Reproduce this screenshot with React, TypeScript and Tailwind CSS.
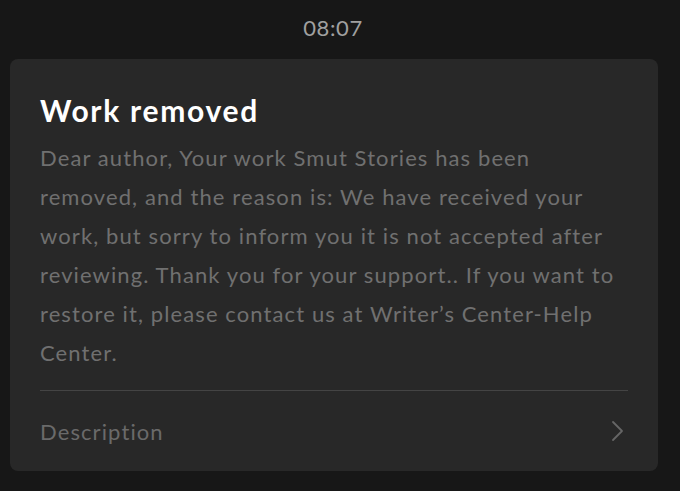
import React from 'react';

export default function App() {
  return (
    <div className="h-[491px] w-[680px] overflow-hidden bg-[#171717] font-['Lato',sans-serif]">
      <div className="flex h-[59px] items-center justify-center pb-1 pr-[14px] text-[22px] tracking-[0.6px] text-[#a0a0a0]">
        08:07
      </div>
      <div className="mx-[10px] w-[648px] rounded-[8px] bg-[#282828] px-[30px] pt-[33px]">
        <h1 className="text-[30px] font-bold leading-[36px] tracking-[1.7px] text-white">Work removed</h1>
        <p className="mt-[10px] text-[22px] leading-[39px] tracking-[1.1px] text-[#707070]">
          Dear author, Your work Smut Stories has been removed, and the reason is: We have received your
          work, but sorry to inform you it is not accepted after reviewing. Thank you for your support.. If
          you want to restore it, please contact us at Writer’s Center-Help Center.
        </p>
        <div className="mt-[18px] h-px bg-[#444444]" />
        <div className="flex h-[80px] items-center justify-between">
          <span className="text-[22px] tracking-[1.1px] text-[#6a6a6a]">Description</span>
          <svg width="14" height="24" viewBox="0 0 14 24" fill="none" className="mr-[4px]">
            <path d="M3 3l9 9-9 9" stroke="#666666" strokeWidth="1.8" strokeLinecap="round" strokeLinejoin="round" />
          </svg>
        </div>
      </div>
    </div>
  );
}
